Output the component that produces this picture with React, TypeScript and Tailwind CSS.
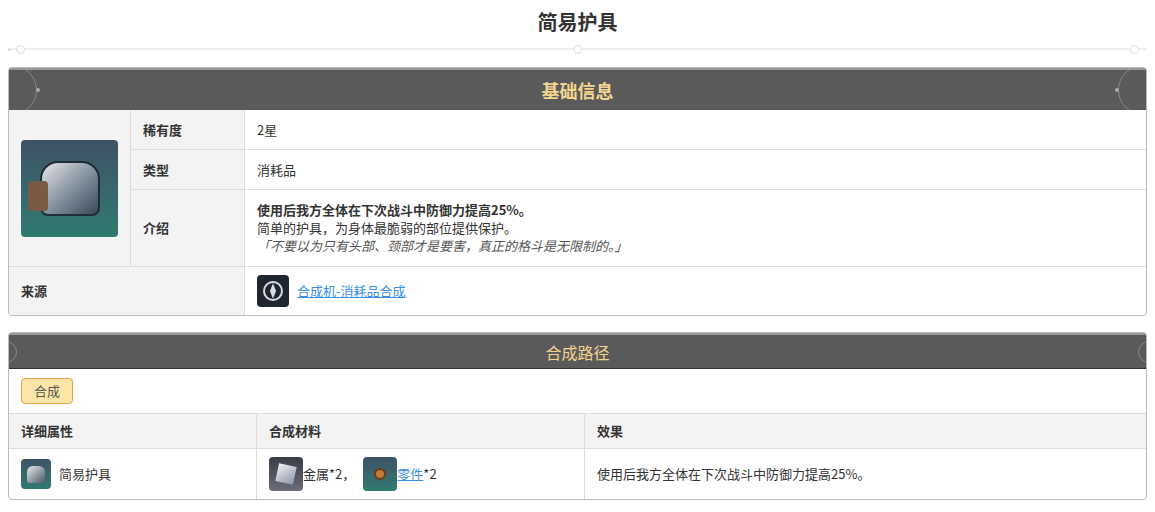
export default function App() {
  const font = { fontFamily: '"Noto Sans CJK SC", "Noto Sans", sans-serif' };
  return (
    <main className="min-h-screen bg-white text-[#333] text-[13px] px-2" style={font}>
      <h1 className="pt-[8px] h-[40px] text-center text-[20px] font-bold leading-[28px] text-[#333]">简易护具</h1>
      {/* decorative line */}
      <div className="relative h-[18px] flex items-center">
        <div className="h-[2px] w-full bg-[#eee]" />
        <span className="absolute left-[0px] w-[3px] h-[3px] rounded-full bg-[#ddd]" />
        <span className="absolute left-[8px] w-[9px] h-[9px] rounded-full border border-[#ddd] bg-white" />
        <span className="absolute left-1/2 -translate-x-1/2 w-[9px] h-[9px] rounded-full border border-[#ddd] bg-white" />
        <span className="absolute right-[8px] w-[9px] h-[9px] rounded-full border border-[#ddd] bg-white" />
      </div>

      {/* Basic info */}
      <section className="mt-[9px] rounded border border-[#bbb] overflow-hidden">
        <div className="relative h-[42px] bg-[#5a5a5a] border-t-2 border-[#999] flex items-center justify-center overflow-hidden">
          <span className="absolute -left-[22px] w-[50px] h-[50px] rounded-full border border-[#888]" />
          <span className="absolute left-[27px] w-[4px] h-[4px] rounded-full bg-[#aaa]" />
          <span className="absolute -right-[22px] w-[50px] h-[50px] rounded-full border border-[#888]" />
          <span className="absolute right-[27px] w-[4px] h-[4px] rounded-full bg-[#aaa]" />
          <h2 className="text-[18px] font-bold text-[#f3d58f]">基础信息</h2>
        </div>
        <div className="grid grid-cols-[122px_114px_1fr]">
          <div className="row-span-3 bg-[#f3f3f3] border-r border-[#ddd] flex items-center justify-center">
            <div className="w-[97px] h-[97px] rounded bg-gradient-to-b from-[#3d5266] to-[#2f7a70] flex items-center justify-center">
              <div className="w-[60px] h-[55px] rounded-[18px_18px_8px_8px] bg-gradient-to-br from-[#e8e8ea] via-[#8895a3] to-[#3b4a5a] border-2 border-[#222c36] relative">
                <div className="absolute left-[-14px] top-[18px] w-[20px] h-[30px] rounded bg-[#7a5a44]" />
              </div>
            </div>
          </div>
          <div className="h-[40px] bg-[#f3f3f3] border-r border-b border-[#ddd] flex items-center px-3 font-bold">稀有度</div>
          <div className="h-[40px] border-b border-[#ddd] flex items-center px-3">2星</div>
          <div className="h-[40px] bg-[#f3f3f3] border-r border-b border-[#ddd] flex items-center px-3 font-bold">类型</div>
          <div className="h-[40px] border-b border-[#ddd] flex items-center px-3">消耗品</div>
          <div className="h-[76px] bg-[#f3f3f3] border-r border-[#ddd] flex items-center px-3 font-bold">介绍</div>
          <div className="h-[76px] flex flex-col justify-center px-3 leading-[18px]">
            <p className="font-bold">使用后我方全体在下次战斗中防御力提高25%。</p>
            <p>简单的护具，为身体最脆弱的部位提供保护。</p>
            <p className="italic text-[#555]">「不要以为只有头部、颈部才是要害，真正的格斗是无限制的。」</p>
          </div>
          <div className="col-span-2 h-[49px] bg-[#f3f3f3] border-t border-r border-[#ddd] flex items-center px-3 font-bold">来源</div>
          <div className="h-[49px] border-t border-[#ddd] flex items-center px-3 gap-2">
            <div className="w-[32px] h-[32px] rounded bg-[#1f2630] flex items-center justify-center">
              <svg width="24" height="24" viewBox="0 0 24 24" fill="none" stroke="#d8dde3" strokeWidth="2">
                <path d="M12 3a9 9 0 0 1 9 9" /><path d="M21 12a9 9 0 0 1-9 9" /><path d="M12 21a9 9 0 0 1-9-9" /><path d="M3 12a9 9 0 0 1 9-9" />
                <path d="M12 7l2 5-2 5-2-5z" fill="#d8dde3" />
              </svg>
            </div>
            <a className="text-[#3a8ee6] underline">合成机-消耗品合成</a>
          </div>
        </div>
      </section>

      {/* Synthesis */}
      <section className="mt-[16px] rounded border border-[#bbb] overflow-hidden">
        <div className="relative h-[36px] bg-[#5a5a5a] border-t-2 border-[#999] border-b border-b-[#333] flex items-center justify-center overflow-hidden">
          <span className="absolute -left-[14px] w-[22px] h-[22px] rounded-full border border-[#888]" />
          <span className="absolute -right-[14px] w-[22px] h-[22px] rounded-full border border-[#888]" />
          <h2 className="text-[16px] text-[#f3d58f]">合成路径</h2>
        </div>
        <div className="h-[44px] flex items-center px-3">
          <span className="px-3 h-[26px] flex items-center rounded border border-[#e0a64a] bg-[#fbe6a7] text-[#555]">合成</span>
        </div>
        <div className="grid grid-cols-[248px_328px_1fr]">
          <div className="h-[36px] bg-[#f3f3f3] border-y border-r border-[#ddd] flex items-center px-3 font-bold">详细属性</div>
          <div className="h-[36px] bg-[#f3f3f3] border-y border-r border-[#ddd] flex items-center px-3 font-bold">合成材料</div>
          <div className="h-[36px] bg-[#f3f3f3] border-y border-[#ddd] flex items-center px-3 font-bold">效果</div>
          <div className="h-[50px] border-r border-[#ddd] flex items-center px-3 gap-2">
            <div className="w-[30px] h-[30px] rounded bg-gradient-to-b from-[#3d5266] to-[#2f7a70] flex items-center justify-center">
              <div className="w-[18px] h-[17px] rounded-[6px_6px_3px_3px] bg-gradient-to-br from-[#eee] to-[#4a5866]" />
            </div>
            <span>简易护具</span>
          </div>
          <div className="h-[50px] border-r border-[#ddd] flex items-center px-3">
            <div className="w-[34px] h-[34px] rounded bg-gradient-to-b from-[#3a3d48] to-[#6a6d78] flex items-center justify-center">
              <div className="w-[18px] h-[18px] rotate-12 bg-gradient-to-br from-[#f0f3f6] to-[#8a96a4]" />
            </div>
            <span>金属*2，</span>
            <div className="ml-2 w-[34px] h-[34px] rounded bg-gradient-to-b from-[#3d5266] to-[#2f7a70] flex items-center justify-center">
              <div className="w-[12px] h-[12px] rounded-full bg-[#c07a3c] border-2 border-[#6a3a1a]" />
            </div>
            <a className="text-[#3a8ee6] underline">零件</a><span>*2</span>
          </div>
          <div className="h-[50px] flex items-center px-3">使用后我方全体在下次战斗中防御力提高25%。</div>
        </div>
      </section>
    </main>
  );
}
